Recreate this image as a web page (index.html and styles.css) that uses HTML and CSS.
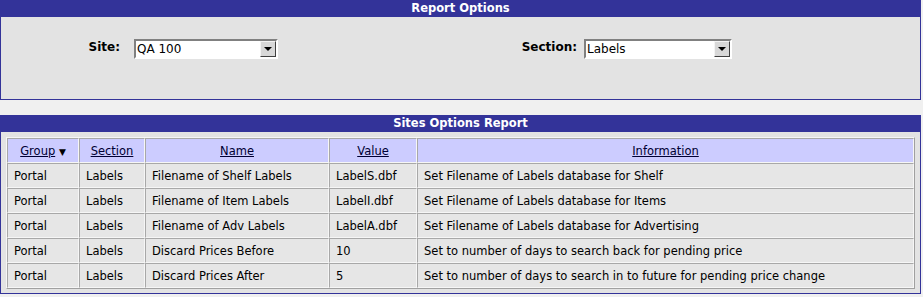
FILE: index.html
```html
<!DOCTYPE html>
<html lang="en">
<head>
<meta charset="UTF-8" />
<title>Sites Options Report</title>
<link rel="stylesheet" href="styles.css">
</head>
<body>

<div class="panel">
  <div class="panel-title">Report Options</div>
  <div class="panel-body options">
    <label class="opt-label" for="site-select">Site:</label>
    <span class="select-wrap site-wrap">
      <select id="site-select"><option>QA 100</option></select>
    </span>
    <label class="opt-label" for="section-select">Section:</label>
    <span class="select-wrap section-wrap">
      <select id="section-select"><option>Labels</option></select>
    </span>
  </div>
</div>

<div class="panel report">
  <div class="panel-title">Sites Options Report</div>
  <div class="panel-body">
    <table class="report-table">
      <thead>
        <tr>
          <th class="col-group"><a href="#">Group</a> <span class="sort">&#9660;</span></th>
          <th class="col-section"><a href="#">Section</a></th>
          <th class="col-name"><a href="#">Name</a></th>
          <th class="col-value"><a href="#">Value</a></th>
          <th><a href="#">Information</a></th>
        </tr>
      </thead>
      <tbody>
        <tr><td>Portal</td><td>Labels</td><td>Filename of Shelf Labels</td><td>LabelS.dbf</td><td>Set Filename of Labels database for Shelf</td></tr>
        <tr><td>Portal</td><td>Labels</td><td>Filename of Item Labels</td><td>LabelI.dbf</td><td>Set Filename of Labels database for Items</td></tr>
        <tr><td>Portal</td><td>Labels</td><td>Filename of Adv Labels</td><td>LabelA.dbf</td><td>Set Filename of Labels database for Advertising</td></tr>
        <tr><td>Portal</td><td>Labels</td><td>Discard Prices Before</td><td>10</td><td>Set to number of days to search back for pending price</td></tr>
        <tr><td>Portal</td><td>Labels</td><td>Discard Prices After</td><td>5</td><td>Set to number of days to search in to future for pending price change</td></tr>
      </tbody>
    </table>
  </div>
</div>

</body>
</html>
```

FILE: styles.css
```css
body {
  margin: 0;
  padding: 0 2px 0 0;
  background: #f0f0f0;
  font-family: "DejaVu Sans", Verdana, sans-serif;
  font-size: 11.5px;
  color: #000;
}
.panel {
  background: #e3e3e3;
}
.panel.report {
  margin-top: 15px;
}
.panel-title {
  background: #333399;
  color: #fff;
  font-weight: bold;
  text-align: center;
  height: 17px;
  line-height: 16px;
}
.panel-body {
  border: 1px solid #333399;
  border-top: none;
}
.options {
  display: grid;
  grid-template-columns: 119px 397px 60px 1fr;
  align-items: center;
  height: 60px;
  padding-top: 22px;
  align-content: start;
}
.opt-label {
  justify-self: end;
  font-weight: bold;
  font-size: 12px;
  padding-bottom: 5px;
}
.select-wrap {
  position: relative;
  display: block;
  height: 20px;
  box-sizing: border-box;
  border: 2px solid;
  border-color: #808080 #fff #fff #808080;
  background: #fff;
}
.site-wrap { width: 144px; margin-left: 14px; }
.section-wrap { width: 148px; margin-left: 7px; }
.select-wrap select {
  -webkit-appearance: none;
  appearance: none;
  border: none;
  outline: none;
  background: transparent;
  font-family: inherit;
  font-size: 12px;
  width: 100%;
  height: 16px;
  padding: 0 0 0 1px;
  margin: 0;
  color: #000;
}
.select-wrap::after {
  content: "";
  position: absolute;
  top: 0;
  right: 0;
  width: 16px;
  height: 16px;
  box-sizing: border-box;
  border: 1px solid;
  border-color: #f4f4f4 #404040 #404040 #f4f4f4;
  background: #d8d8d8;
  pointer-events: none;
}
.select-wrap::before {
  content: "";
  position: absolute;
  top: 6px;
  right: 4px;
  border-left: 4px solid transparent;
  border-right: 4px solid transparent;
  border-top: 4px solid #000;
  z-index: 1;
  pointer-events: none;
}
.report .panel-body {
  padding: 5px 5px 4px 5px;
}
.report-table {
  width: 100%;
  border-collapse: separate;
  border-spacing: 0;
  border: 1px solid;
  border-color: #f6f6f6 #a0a0a0 #a0a0a0 #f6f6f6;
  background: #e6e6e6;
}
.report-table th,
.report-table td {
  height: 23px;
  padding: 0 6px;
  border: 1px solid;
  border-color: #a8a8a8 #f6f6f6 #f6f6f6 #a8a8a8;
  white-space: nowrap;
}
.report-table th {
  background: #ccccff;
  font-weight: normal;
  text-align: center;
}
.report-table th a {
  color: #000033;
}
.report-table td {
  text-align: left;
}
.sort {
  font-size: 9px;
}
.col-group { width: 58px; }
.col-section { width: 52px; }
.col-name { width: 170px; }
.col-value { width: 74px; }
```
